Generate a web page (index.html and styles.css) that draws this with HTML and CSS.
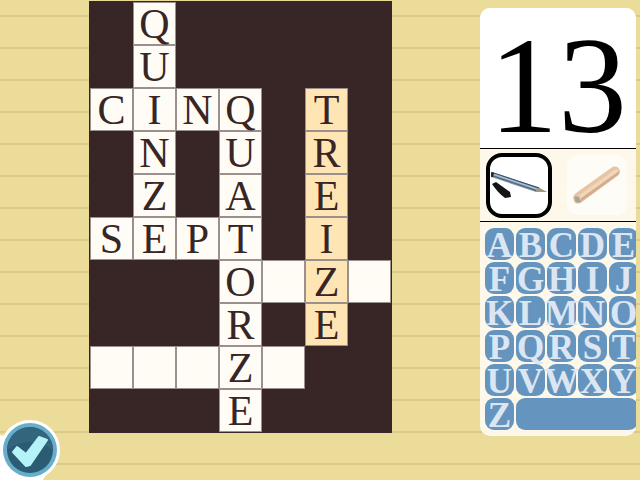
FILE: index.html
```html
<!DOCTYPE html>
<html lang="en">
<head>
    <meta charset="UTF-8">
    <title>Crossword numbers</title>
    <link rel="stylesheet" href="styles.css">
</head>
<body>

<main class="board">
    <div class="cell c1">Q</div>
    <div class="cell c1">U</div>
    <div class="cell c0">C</div>
    <div class="cell">I</div>
    <div class="cell">N</div>
    <div class="cell">Q</div>
    <div class="cell hint c5">T</div>
    <div class="cell c1">N</div>
    <div class="cell c3">U</div>
    <div class="cell hint c5">R</div>
    <div class="cell c1">Z</div>
    <div class="cell c3">A</div>
    <div class="cell hint c5">E</div>
    <div class="cell c0">S</div>
    <div class="cell">E</div>
    <div class="cell">P</div>
    <div class="cell">T</div>
    <div class="cell hint c5">I</div>
    <div class="cell c3">O</div>
    <div class="cell"></div>
    <div class="cell hint">Z</div>
    <div class="cell"></div>
    <div class="cell c3">R</div>
    <div class="cell hint c5">E</div>
    <div class="cell c0"></div>
    <div class="cell"></div>
    <div class="cell"></div>
    <div class="cell">Z</div>
    <div class="cell"></div>
    <div class="cell c3">E</div>
</main>

<aside class="panel">
    <div class="number">13</div>
    <div class="tools">
        <div class="tool selected">
            <svg width="58" height="57" viewBox="0 0 58 57">
                <path d="M2 15 L48 30 L57 35 L46 35 L1 20 Z" fill="#7f9ab3"/>
                <path d="M2 15.5 L49 31" stroke="#3b4c5e" stroke-width="1" fill="none"/>
                <path d="M3 19 L46 33.5" stroke="#4a5f72" stroke-width="1" fill="none"/>
                <path d="M4 17.5 L47 32" stroke="#b9cad8" stroke-width="1" fill="none"/>
                <path d="M1 15 L4 16 L3 20 L1 20 Z" fill="#2a2a2a"/>
                <path d="M47 31 L57 35 L46 35 Z" fill="#a69a6c"/>
                <path d="M2 27 L6 25 L20 35 L21 40 L15 41 Q8 36 2 27 Z" fill="#151515"/>
            </svg>
        </div>
        <div class="tool">
            <svg class="pencil" width="48" height="39" viewBox="0 0 56 46">
                <path d="M8 43 L52 11 Q56 7 53 3 Q49 0 45 3 L3 33 Q0 36 1 40 Q3 45 8 43 Z" fill="#e5bf9b" stroke="#e5bf9b" stroke-width="1.5"/>
                <path d="M5 36 L48 5 Q52 3 54 6 L8 40 Z" fill="#f0d3b4"/>
                <path d="M8 43 L52 11 Q55 8 54 6 L9 38 Z" fill="#cfa584"/>
                <path d="M1 36 L7 36 L9 43 L3 43 Z" fill="#a39a90"/>
            </svg>
        </div>
    </div>
    <div class="keys">
        <div class="key">A</div>
        <div class="key">B</div>
        <div class="key">C</div>
        <div class="key">D</div>
        <div class="key">E</div>
        <div class="key">F</div>
        <div class="key">G</div>
        <div class="key">H</div>
        <div class="key">I</div>
        <div class="key">J</div>
        <div class="key">K</div>
        <div class="key">L</div>
        <div class="key">M</div>
        <div class="key">N</div>
        <div class="key">O</div>
        <div class="key">P</div>
        <div class="key">Q</div>
        <div class="key">R</div>
        <div class="key">S</div>
        <div class="key">T</div>
        <div class="key">U</div>
        <div class="key">V</div>
        <div class="key">W</div>
        <div class="key">X</div>
        <div class="key">Y</div>
        <div class="key">Z</div>
        <div class="key space"></div>
    </div>
</aside>

<div class="check">
    <svg width="60" height="60" viewBox="0 0 60 60">
        <path d="M0 15 L0 60 L43 60 L60 30 Z" fill="#fff"/>
        <circle cx="30" cy="30" r="30" fill="#fff"/>
        <circle cx="30" cy="30" r="27" fill="#66aeca"/>
        <circle cx="30" cy="30" r="23" fill="#2b5c74"/>
        <path d="M7 30 A23 23 0 0 1 53 30 Q30 14 7 30 Z" fill="#33667e"/>
        <path d="M13 32 L17 27 L26 34 L39 17 L47 20 L30 45 L26 46 Z" fill="#b6f3f9" stroke="#b6f3f9" stroke-width="2" stroke-linejoin="round"/>
    </svg>
</div>

</body>
</html>
```

FILE: styles.css
```css
html, body {
    height: 100%;
}
body {
    margin: 0;
    overflow: hidden;
    display: flex;
    align-items: flex-start;
    justify-content: space-between;
    background: repeating-linear-gradient(#ecdc9a 0 15px, #d9c98a 15px 17px, #ecdc9a 17px 32px);
    font-family: "Liberation Serif", serif;
}
.board {
    display: grid;
    grid-template-columns: repeat(7, 43px);
    grid-auto-rows: 43px;
    margin: 1px 0 0 89px;
    padding: 1px;
    background-color: #372625;
}
.cell {
    display: flex;
    align-items: center;
    justify-content: center;
    box-sizing: border-box;
    border: 1px solid #9a908e;
    background-color: #fffcf6;
    color: #372625;
    font-size: 42px;
    line-height: 1;
}
.hint {
    background-color: #ffe5b4;
}
.c0 { grid-column-start: 1; }
.c1 { grid-column-start: 2; }
.c3 { grid-column-start: 4; }
.c5 { grid-column-start: 6; }

.panel {
    width: 156px;
    height: 428px;
    margin: 8px 4px 0 0;
    border-radius: 10px;
    background-color: rgba(255, 252, 245, 0.88);
    overflow: hidden;
}
.number {
    height: 141px;
    padding-top: 23px;
    background-color: #fff;
    border-bottom: 1px solid #000;
    box-sizing: border-box;
    text-align: center;
    color: #000;
    font-size: 138px;
    line-height: 110px;
}
.tools {
    display: flex;
    align-items: center;
    gap: 15px;
    height: 72px;
    padding-left: 6px;
    border-bottom: 1px solid #000;
}
.tool {
    display: flex;
    align-items: center;
    justify-content: center;
    width: 60px;
    height: 60px;
    border-radius: 10px;
    background-color: rgba(255, 255, 255, 0.6);
}
.pencil {
    opacity: 0.9;
}
.selected {
    width: 58px;
    height: 57px;
    border: 4px solid #000;
    border-radius: 16px;
    background-color: #fff;
}
.keys {
    display: grid;
    grid-template-columns: repeat(5, 29px);
    grid-auto-rows: 32px;
    gap: 2px;
    padding: 6px 0 0 5px;
}
.key {
    display: flex;
    align-items: center;
    justify-content: center;
    box-sizing: border-box;
    padding-top: 4px;
    border-radius: 9px;
    background-color: #6595bf;
    color: #dce6f3;
    font-size: 35px;
    font-weight: bold;
    line-height: 26px;
}
.space {
    grid-column: span 4;
}

.check {
    position: absolute;
    left: 0;
    bottom: 0;
    width: 60px;
    height: 60px;
}
```
